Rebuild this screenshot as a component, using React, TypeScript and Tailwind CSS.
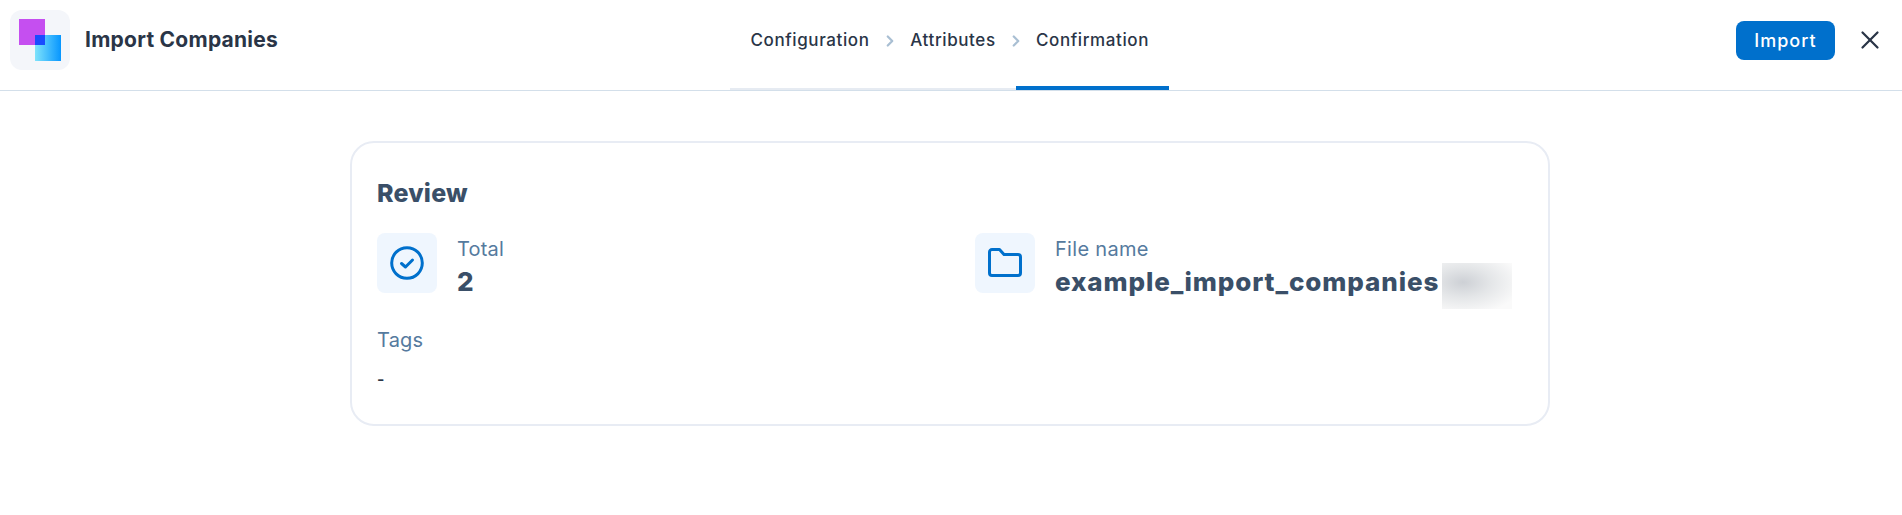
import React from 'react';
import { ChevronRight, X } from 'lucide-react';

const STEPS = [
  { label: 'Configuration', width: 'w-[160px]', active: false, chevron: true },
  { label: 'Attributes', width: 'w-[126px]', active: false, chevron: true },
  { label: 'Confirmation', width: 'w-[153px]', active: true, chevron: false },
];

function Logo() {
  return (
    <div className="w-[60px] h-[60px] rounded-xl bg-[#f4f6fa] flex items-center justify-center">
      <svg width="42" height="42" viewBox="0 0 42 42">
        <defs>
          <linearGradient id="blueFill" x1="0" y1="0" x2="1" y2="0">
            <stop offset="0" stopColor="#7fe3fb" />
            <stop offset="1" stopColor="#0796ff" />
          </linearGradient>
        </defs>
        <rect x="0" y="0" width="26" height="26" fill="#c54ff0" />
        <rect x="16" y="16" width="26" height="26" fill="url(#blueFill)" />
        <rect x="16" y="16" width="10" height="10" fill="#1a4bff" />
      </svg>
    </div>
  );
}

function InfoBox({ children }: { children: React.ReactNode }) {
  return (
    <div className="w-[60px] h-[60px] rounded-lg bg-[#eff6fe] flex items-center justify-center shrink-0">
      {children}
    </div>
  );
}

export default function App() {
  return (
    <div className="w-[1902px] h-[515px] bg-white overflow-hidden font-['Inter',sans-serif] text-[#2d3748]">
      {/* Header */}
      <header className="h-[91px] border-b border-[#d3dfea] flex pl-[10px]">
        <div className="flex items-center gap-[15px] w-[720px] h-[60px] mt-[10px]">
          <Logo />
          <h1 className="text-[21px] font-bold tracking-[0.25px] text-[#2a3547]">Import Companies</h1>
        </div>

        <nav className="flex">
          {STEPS.map(step => (
            <div
              key={step.label}
              className={`relative ${step.width} flex justify-center pt-[28px] ${step.active ? 'border-b-[4px] border-[#0070cc]' : 'border-b-[2px] border-[#e6ebf2]'}`}
            >
              <span className="text-[17px] font-medium tracking-[0.6px] leading-[24px] text-[#2a3547]">{step.label}</span>
              {step.chevron && (
                <ChevronRight size={18} strokeWidth={3} className="absolute right-[-9px] top-[32px] text-[#a9bfd3]" />
              )}
            </div>
          ))}
        </nav>

        <div className="ml-auto flex items-center gap-5 h-[60px] mt-[10px] pr-[17px]">
          <button className="w-[99px] h-[39px] mt-px rounded-lg bg-[#0070cc] text-white text-[18px] font-medium tracking-[1px]">
            Import
          </button>
          <X size={30} strokeWidth={1.8} className="text-[#2a3547]" />
        </div>
      </header>

      {/* Review card */}
      <main className="pt-[50px]">
        <section className="w-[1200px] h-[285px] ml-[350px] rounded-3xl border-2 border-[#e8ecf4] px-[25px] pt-[32px]">
          <h2 className="text-[25px] leading-[36px] font-extrabold tracking-[0.2px] text-[#3a4f68]">Review</h2>

          <div className="grid grid-cols-[598px_1fr] mt-[22px]">
            <div className="flex gap-5">
              <InfoBox>
                <svg width="34" height="34" viewBox="0 0 34 34" fill="none" stroke="#0070cc">
                  <circle cx="17" cy="17" r="15.3" strokeWidth="3" />
                  <path d="M11.5 17.5l4 3.5 7-7" strokeWidth="3" strokeLinecap="round" strokeLinejoin="round" />
                </svg>
              </InfoBox>
              <div className="pt-[2px]">
                <div className="text-[20px] leading-[28px] tracking-[0.2px] text-[#557a9e]">Total</div>
                <div className="mt-[3px] text-[26px] leading-[32px] font-extrabold text-[#3a4f68]">2</div>
              </div>
            </div>
            <div className="flex gap-5">
              <InfoBox>
                <svg width="34" height="30" viewBox="0 0 34 30" fill="none" stroke="#0070cc" strokeWidth="3" strokeLinejoin="round">
                  <path d="M1.5 4a2.5 2.5 0 0 1 2.5-2.5h7.5l4.5 5h14a2.5 2.5 0 0 1 2.5 2.5v16a2.5 2.5 0 0 1-2.5 2.5H4a2.5 2.5 0 0 1-2.5-2.5z" />
                </svg>
              </InfoBox>
              <div className="pt-[2px]">
                <div className="text-[20px] leading-[28px] tracking-[0.3px] text-[#557a9e]">File name</div>
                <div className="relative mt-[3px] text-[26px] leading-[32px] font-extrabold tracking-[0.9px] text-[#3a4f68]">
                  example_import_companies
                  <div className="absolute left-[387px] top-[-3px] w-[70px] h-[46px] bg-[radial-gradient(ellipse_at_30%_42%,#cdd0d5_0%,#e4e6e8_40%,#fafafa_85%)]" />
                </div>
              </div>
            </div>
          </div>

          <div className="mt-[28px] text-[20px] leading-[28px] tracking-[0.2px] text-[#557a9e]">Tags</div>
          <div className="mt-[13px] text-[16px] leading-[24px] font-semibold text-[#2a3547]">-</div>
        </section>
      </main>
    </div>
  );
}
